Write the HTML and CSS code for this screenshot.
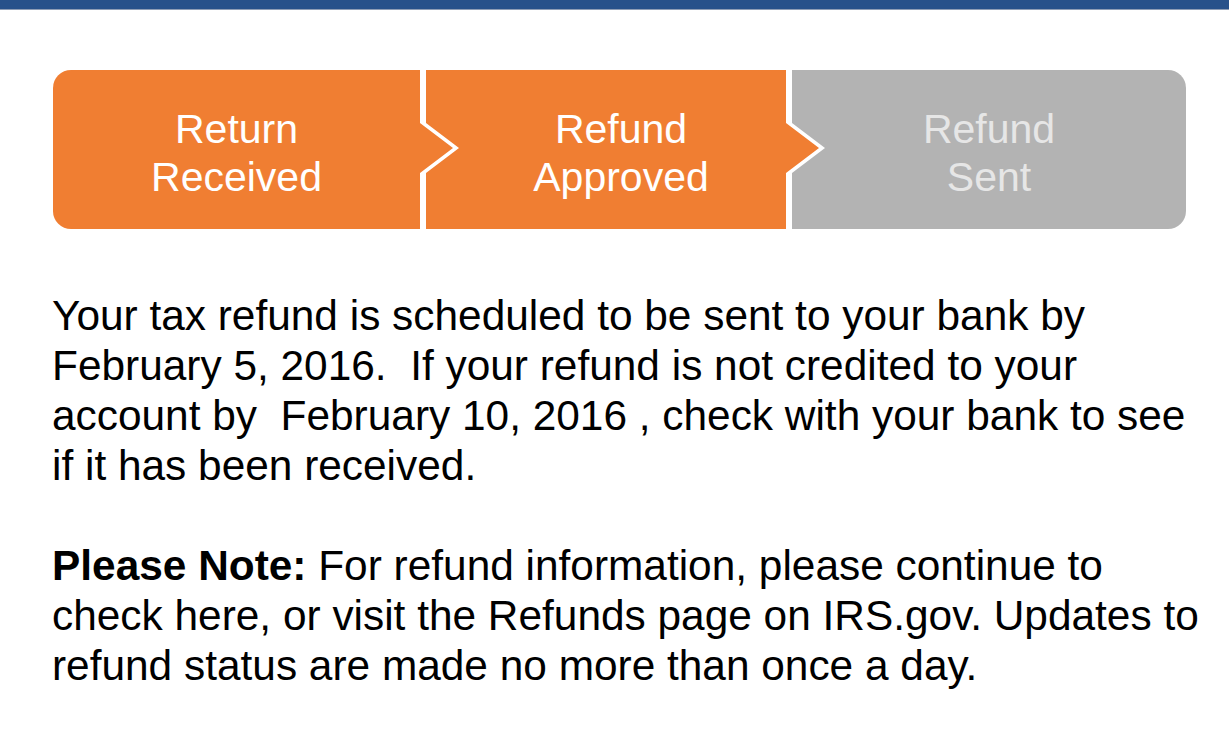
FILE: index.html
```html
<!DOCTYPE html>
<html lang="en">
<head>
<meta charset="utf-8">
<title>Refund Status</title>
<link rel="stylesheet" href="styles.css">
</head>
<body>
<div class="topbar"></div>
<main class="content">
  <div class="stepper">
    <div class="step step-first done"><span>Return<br>Received</span></div>
    <div class="step step-mid done"><span>Refund<br>Approved</span></div>
    <div class="step step-last pending"><span>Refund<br>Sent</span></div>
  </div>
  <p class="msg">Your tax refund is scheduled to be sent to your bank by February 5, 2016.&nbsp; If your refund is not credited to your account by&nbsp; February 10, 2016 , check with your bank to see if it has been received.</p>
  <p class="msg"><strong>Please Note:</strong> For refund information, please continue to check here, or visit the Refunds page on IRS.gov. Updates to refund status are made no more than once a day.</p>
</main>
</body>
</html>
```

FILE: styles.css
```css
html, body {
  margin: 0;
  padding: 0;
  background: #ffffff;
}
body {
  font-family: "Liberation Sans", Arial, Helvetica, sans-serif;
  color: #000;
}
.topbar {
  height: 9px;
  background: #27518a;
  border-bottom: 1px solid #8e9db5;
}
.content {
  padding: 60px 19px 0 52px;
}
.stepper {
  display: flex;
  height: 159px;
  width: 1133px;
  margin-left: 1px;
  border-radius: 18px;
  overflow: hidden;
}
.step {
  display: flex;
  align-items: center;
  justify-content: center;
  text-align: center;
  font-size: 41px;
  line-height: 48px;
  box-sizing: border-box;
  flex: none;
}
.step span { display: block; padding-top: 6px; }
.done { background: #f07e32; color: #ffffff; }
.pending { background: #b3b3b3; color: #e6e6e6; }
.step-first {
  width: 400px;
  padding-right: 33px;
  clip-path: polygon(0 0, calc(100% - 33px) 0, calc(100% - 33px) 53px, 100% 78px, calc(100% - 33px) 103px, calc(100% - 33px) 100%, 0 100%);
  position: relative;
  z-index: 2;
}
.step-mid {
  width: 393px;
  margin-left: -27px;
  padding-left: 30px;
  padding-right: 33px;
  clip-path: polygon(0 0, calc(100% - 33px) 0, calc(100% - 33px) 53px, 100% 78px, calc(100% - 33px) 103px, calc(100% - 33px) 100%, 0 100%, 0 103px, 33px 78px, 0 53px);
  position: relative;
  z-index: 1;
}
.step-last {
  width: 394px;
  margin-left: -27px;
  padding-left: 0;
  clip-path: polygon(0 0, 100% 0, 100% 100%, 0 100%, 0 103px, 33px 78px, 0 53px);
}
.msg {
  font-size: 42.4px;
  line-height: 50px;
  margin: 62px 0 50px;
}
.msg + .msg { margin-top: 0; }
.msg strong { font-weight: bold; }
```
